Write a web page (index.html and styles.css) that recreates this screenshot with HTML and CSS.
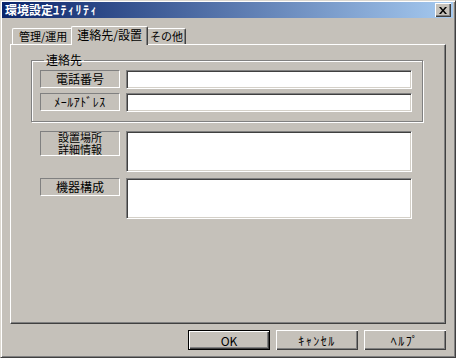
FILE: index.html
```html
<!DOCTYPE html>
<html>
<head>
    <title>環境設定ﾕﾃｨﾘﾃｨ</title>
    <link rel="stylesheet" href="styles.css">
</head>
<body>
    <div class="window">
        <div class="titlebar">
            <span class="title">環境設定<span class="hw">ﾕﾃｨﾘﾃｨ</span></span>
            <button class="close-btn">
                <svg width="8" height="7" viewBox="0 0 8 7">
                    <path d="M0 0h2l2 2.5L6 0h2L5 3.5 8 7H6L4 4.5 2 7H0l3-3.5z" fill="#000"/>
                </svg>
            </button>
        </div>

        <div class="tabs">
            <div class="tab">管理/運用</div>
            <div class="tab active">連絡先/設置</div>
            <div class="tab tab-last">その他</div>
        </div>

        <div class="panel">
            <fieldset class="group">
                <legend>連絡先</legend>
                <div class="row">
                    <div class="label">電話番号</div>
                    <input type="text" class="field">
                </div>
                <div class="row">
                    <div class="label"><span class="hw-label">ﾒｰﾙｱﾄﾞﾚｽ</span></div>
                    <input type="text" class="field">
                </div>
            </fieldset>

            <div class="row row-area">
                <div class="label label-tall">設置場所<br>詳細情報</div>
                <textarea class="area"></textarea>
            </div>
            <div class="row row-area">
                <div class="label">機器構成</div>
                <textarea class="area"></textarea>
            </div>
        </div>

        <div class="buttons">
            <button class="btn default">OK</button>
            <button class="btn">ｷｬﾝｾﾙ</button>
            <button class="btn">ﾍﾙﾌﾟ</button>
        </div>
    </div>
</body>
</html>
```

FILE: styles.css
```css
body {
    margin: 0;
    padding: 0;
    font-family: "Noto Sans CJK JP", "Liberation Sans", sans-serif;
    font-size: 12px;
    color: #000;
    background-color: #c5c1ba;
}

.window {
    width: 456px;
    height: 358px;
    box-sizing: border-box;
    display: flex;
    flex-direction: column;
    background-color: #c5c1ba;
    border-top: 1px solid #dcd8d0;
    border-left: 1px solid #dcd8d0;
    border-right: 1px solid #404040;
    border-bottom: 1px solid #404040;
    box-shadow: inset 1px 1px #fff, inset -1px -1px #808080;
    padding: 1px 2px 2px 1px;
}

.titlebar {
    height: 16px;
    display: flex;
    align-items: center;
    justify-content: space-between;
    padding: 0 2px 0 3px;
    background: linear-gradient(to right, #0a246a, #a6caf0);
}

.title {
    color: white;
    font-weight: bold;
    font-size: 12px;
    line-height: 14px;
}

.hw {
    letter-spacing: 1.5px;
}

.close-btn {
    width: 16px;
    height: 14px;
    padding: 0;
    display: flex;
    align-items: center;
    justify-content: center;
    background-color: #c5c1ba;
    border: none;
    box-shadow: inset 1px 1px #fff, inset -1px -1px #404040, inset -2px -2px #808080;
}

.tabs {
    display: flex;
    align-items: flex-end;
    margin-top: 8px;
    padding-left: 10px;
    height: 18px;
    position: relative;
    z-index: 1;
}

.tab {
    height: 15px;
    line-height: 15px;
    padding: 0 5px 0 6px;
    border-top: 1px solid #fff;
    border-left: 1px solid #fff;
    border-right: 1px solid #404040;
    box-shadow: inset -1px 0 #808080;
    border-radius: 2px 2px 0 0;
    font-size: 11px;
    white-space: nowrap;
}

.tab-last {
    padding: 0 2px 0 3px;
}

.tab.active {
    height: 18px;
    line-height: 16px;
    margin: 0 -2px -1px -2px;
    padding: 0 5px 0 5px;
    background-color: #c5c1ba;
    position: relative;
    font-size: 12px;
}

.panel {
    margin: 0 7px 0 8px;
    height: 280px;
    box-sizing: border-box;
    border-top: 1px solid #fff;
    border-left: 1px solid #fff;
    border-right: 1px solid #404040;
    border-bottom: 1px solid #404040;
    box-shadow: inset -1px -1px #808080;
    padding: 8px 0 0 20px;
}

.group {
    width: 392px;
    height: 69px;
    box-sizing: border-box;
    margin: 0;
    padding: 3px 0 0 8px;
    border: 1px solid #808080;
    box-shadow: inset 1px 1px #fff, 1px 1px #fff;
}

.group legend {
    padding: 0 2px;
    margin-left: 4px;
    line-height: 14px;
}

.row {
    display: flex;
    align-items: flex-start;
    margin-bottom: 4px;
}

.label {
    width: 80px;
    height: 18px;
    box-sizing: border-box;
    border-top: 1px solid #808080;
    border-left: 1px solid #808080;
    border-right: 1px solid #fff;
    border-bottom: 1px solid #fff;
    text-align: center;
    line-height: 15px;
    font-size: 12px;
    margin-right: 6px;
    white-space: nowrap;
}

.hw-label {
    letter-spacing: 0.5px;
}

.label-tall {
    height: 25px;
    font-size: 11px;
    line-height: 11.5px;
}

.field, .area {
    width: 286px;
    height: 19px;
    box-sizing: border-box;
    margin: 0;
    padding: 1px 3px;
    background: white;
    border-top: 1px solid #808080;
    border-left: 1px solid #808080;
    border-right: 1px solid #fff;
    border-bottom: 1px solid #fff;
    box-shadow: inset 1px 1px #404040, inset -1px -1px #d4d0c8;
    font-family: inherit;
    font-size: 12px;
    outline: none;
    resize: none;
}

.area {
    height: 41px;
}

.row-area {
    margin-left: 9px;
    margin-bottom: 6px;
}

.group + .row-area {
    margin-top: 9px;
}

.buttons {
    display: flex;
    justify-content: flex-end;
    gap: 6px;
    margin: 6px 7px 0 0;
}

.btn {
    width: 82px;
    height: 20px;
    padding: 0;
    background-color: #c5c1ba;
    border: none;
    box-shadow: inset 1px 1px #fff, inset -1px -1px #404040, inset -2px -2px #808080;
    font-family: inherit;
    font-size: 12px;
    letter-spacing: 1.5px;
    color: #000;
    cursor: pointer;
}

.btn.default {
    border: 1px solid #000;
    letter-spacing: 0;
}
```
